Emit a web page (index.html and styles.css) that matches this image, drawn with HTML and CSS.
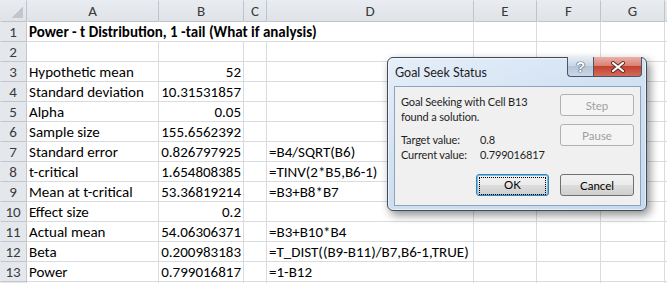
FILE: index.html
```
<html>

<head>
    <meta http-equiv="Content-Type" content="text/html; charset=utf-8">
    <title>Power - t Distribution</title>

    <link rel="stylesheet" href="styles.css">
</head>

<body>
    <div class="sheet">
        <div class="hd corner"><span class="tri"></span></div>
        <div class="hd">A</div>
        <div class="hd">B</div>
        <div class="hd">C</div>
        <div class="hd">D</div>
        <div class="hd">E</div>
        <div class="hd">F</div>
        <div class="hd">G</div>
        <div class="hd"></div>

        <div class="rn">1</div>
        <div class="c heading">Power - t Distribution, 1 -tail (What if analysis)</div>
        <div class="c"></div><div class="c"></div><div class="c"></div><div class="c"></div>

        <div class="rn">2</div>
        <div class="c"></div><div class="c num"></div><div class="c"></div><div class="c"></div>
        <div class="c"></div><div class="c"></div><div class="c"></div><div class="c"></div>

        <div class="rn">3</div>
        <div class="c">Hypothetic mean</div><div class="c num">52</div><div class="c"></div><div class="c"></div>
        <div class="c"></div><div class="c"></div><div class="c"></div><div class="c"></div>

        <div class="rn">4</div>
        <div class="c">Standard deviation</div><div class="c num">10.31531857</div><div class="c"></div><div class="c"></div>
        <div class="c"></div><div class="c"></div><div class="c"></div><div class="c"></div>

        <div class="rn">5</div>
        <div class="c">Alpha</div><div class="c num">0.05</div><div class="c"></div><div class="c"></div>
        <div class="c"></div><div class="c"></div><div class="c"></div><div class="c"></div>

        <div class="rn">6</div>
        <div class="c">Sample size</div><div class="c num">155.6562392</div><div class="c"></div><div class="c"></div>
        <div class="c"></div><div class="c"></div><div class="c"></div><div class="c"></div>

        <div class="rn">7</div>
        <div class="c">Standard error</div><div class="c num">0.826797925</div><div class="c"></div><div class="c">=B4/SQRT(B6)</div>
        <div class="c"></div><div class="c"></div><div class="c"></div><div class="c"></div>

        <div class="rn">8</div>
        <div class="c">t-critical</div><div class="c num">1.654808385</div><div class="c"></div><div class="c">=TINV(2*B5,B6-1)</div>
        <div class="c"></div><div class="c"></div><div class="c"></div><div class="c"></div>

        <div class="rn">9</div>
        <div class="c">Mean at t-critical</div><div class="c num">53.36819214</div><div class="c"></div><div class="c">=B3+B8*B7</div>
        <div class="c"></div><div class="c"></div><div class="c"></div><div class="c"></div>

        <div class="rn">10</div>
        <div class="c">Effect size</div><div class="c num">0.2</div><div class="c"></div><div class="c"></div>
        <div class="c"></div><div class="c"></div><div class="c"></div><div class="c"></div>

        <div class="rn">11</div>
        <div class="c">Actual mean</div><div class="c num">54.06306371</div><div class="c"></div><div class="c">=B3+B10*B4</div>
        <div class="c"></div><div class="c"></div><div class="c"></div><div class="c"></div>

        <div class="rn">12</div>
        <div class="c">Beta</div><div class="c num">0.200983183</div><div class="c"></div><div class="c">=T_DIST((B9-B11)/B7,B6-1,TRUE)</div>
        <div class="c"></div><div class="c"></div><div class="c"></div><div class="c"></div>

        <div class="rn">13</div>
        <div class="c">Power</div><div class="c num">0.799016817</div><div class="c"></div><div class="c">=1-B12</div>
        <div class="c"></div><div class="c"></div><div class="c"></div><div class="c"></div>

        <div class="rn"></div>
        <div class="c"></div><div class="c"></div><div class="c"></div><div class="c"></div>
        <div class="c"></div><div class="c"></div><div class="c"></div><div class="c"></div>
    </div>

    <div class="dialog">
        <div class="caption">Goal Seek Status</div>
        <div class="caption-buttons">
            <span class="cap-help">?</span>
            <span class="cap-close">
                <svg width="16" height="12" viewBox="0 0 16 12">
                    <path d="M3 2 L13 10 M13 2 L3 10" stroke="#5a2a24" stroke-width="4" stroke-linecap="round" fill="none"/>
                    <path d="M3 2 L13 10 M13 2 L3 10" stroke="#ffffff" stroke-width="2.2" stroke-linecap="round" fill="none"/>
                </svg>
            </span>
        </div>

        <div class="panel">
            <div class="panel-top">
                <div class="msg">
                    <p>Goal Seeking with Cell B13<br>found a solution.</p>
                    <div class="vals">
                        <span>Target value:</span><span>0.8</span>
                        <span>Current value:</span><span>0.799016817</span>
                    </div>
                </div>
                <div class="side">
                    <button disabled>Step</button>
                    <button disabled>Pause</button>
                </div>
            </div>
            <div class="actions">
                <button class="default"><span>OK</span></button>
                <button>Cancel</button>
            </div>
        </div>
    </div>
</body>

</html>
```

FILE: styles.css
```
body {
    margin: 0;
    background: #ffffff;
    font-family: Carlito, Lato, "Liberation Sans", sans-serif;
    font-size: 15px;
    color: #000000;
    overflow: hidden;
}

.sheet {
    display: grid;
    grid-template-columns: 26px 131px 84px 22px 206px 62px 63px 63px 1fr;
    grid-template-rows: 21px;
    grid-auto-rows: 19px;
    gap: 1px;
    background: #d9dbde;
    width: 667px;
    height: 283px;
    overflow: hidden;
}

.hd {
    background: linear-gradient(#e9ecf0, #dfe3e8);
    color: #3a3a3a;
    text-align: center;
    line-height: 22px;
    box-shadow: 1px 1px 0 #bfc4ca;
}

.corner {
    display: flex;
    justify-content: flex-end;
    align-items: flex-end;
    padding: 0 3px 3px 0;
}

.tri {
    width: 11px;
    height: 11px;
    background: linear-gradient(to bottom right, transparent 50%, #c3c7cc 50%);
}

.rn {
    background: #e4e7eb;
    color: #3a3a3a;
    text-align: center;
    line-height: 20px;
    box-shadow: 1px 1px 0 #c3c7cc;
}

.c {
    background: #ffffff;
    padding: 0 2px 0 2px;
    line-height: 20px;
    white-space: nowrap;
}

.num {
    text-align: right;
}

.heading {
    grid-column: span 4;
    font-weight: bold;
}

/* goal seek dialog */
.dialog {
    position: absolute;
    left: 387px;
    top: 57px;
    width: 258px;
    border: 1px solid #3f4b5a;
    border-radius: 6px;
    background: linear-gradient(160deg, #e6eff9 0%, #d3e2f3 40%, #c6d9ee 100%);
    box-shadow: inset 0 0 0 1px rgba(255, 255, 255, 0.55), 3px 4px 10px rgba(0, 0, 0, 0.45);
    font-family: Lato, "Liberation Sans", sans-serif;
    font-size: 11px;
    letter-spacing: -0.15px;
    color: #1e1e1e;
}

.caption {
    height: 28px;
    line-height: 29px;
    padding-left: 7px;
    font-size: 12.5px;
    letter-spacing: 0;
    color: #1c1c1c;
}

.caption-buttons {
    position: absolute;
    top: -1px;
    right: 4px;
    display: flex;
}

.cap-help,
.cap-close {
    height: 19px;
    border: 1px solid #4a5462;
    border-top-width: 0;
    display: flex;
    align-items: center;
    justify-content: center;
}

.cap-help {
    width: 25px;
    border-right: none;
    border-radius: 0 0 0 4px;
    background: linear-gradient(#e5ecf4, #c9d6e5 45%, #b4c5d9 50%, #c9d8e8);
    color: #ffffff;
    font-weight: bold;
    font-size: 15px;
    font-family: "Liberation Sans", sans-serif;
    text-shadow: 0 0 1px #3c4756, 0 0 1px #3c4756, 0 0 1px #3c4756;
}

.cap-close {
    width: 47px;
    border-radius: 0 0 4px 0;
    background: linear-gradient(#eab1a8, #d98273 45%, #c4422f 50%, #d36b5b);
}

.panel {
    margin: 0 5px 4px 6px;
    border: 1px solid #8ea3bd;
    background: #f0f0f0;
    padding: 7px 6px 9px 6px;
}

.panel-top {
    display: flex;
    justify-content: space-between;
    align-items: flex-start;
}

.msg p {
    margin: 0;
    line-height: 15px;
}

.vals {
    display: grid;
    grid-template-columns: 79px auto;
    margin-top: 8px;
    line-height: 15px;
    white-space: nowrap;
}

.side {
    display: flex;
    flex-direction: column;
    gap: 8px;
}

button {
    width: 74px;
    height: 22px;
    padding: 0;
    border: 1px solid #707070;
    border-radius: 3px;
    background: linear-gradient(#f2f2f2, #ebebeb 49%, #dddddd 50%, #cfcfcf);
    font-family: Lato, "Liberation Sans", sans-serif;
    font-size: 11.5px;
    color: #000000;
}

button:disabled {
    border-color: #adb2b5;
    background: #f4f4f4;
    color: #a0a0a0;
}

.actions {
    display: flex;
    justify-content: flex-end;
    gap: 11px;
    margin-top: 12px;
}

.default {
    width: 73px;
    border-color: #3c7fb1;
    box-shadow: inset 0 0 0 1px #6fc0ea;
    padding: 2px;
}

.default span {
    display: block;
    height: 100%;
    line-height: 14px;
    border: 1px dotted #000000;
}
```
